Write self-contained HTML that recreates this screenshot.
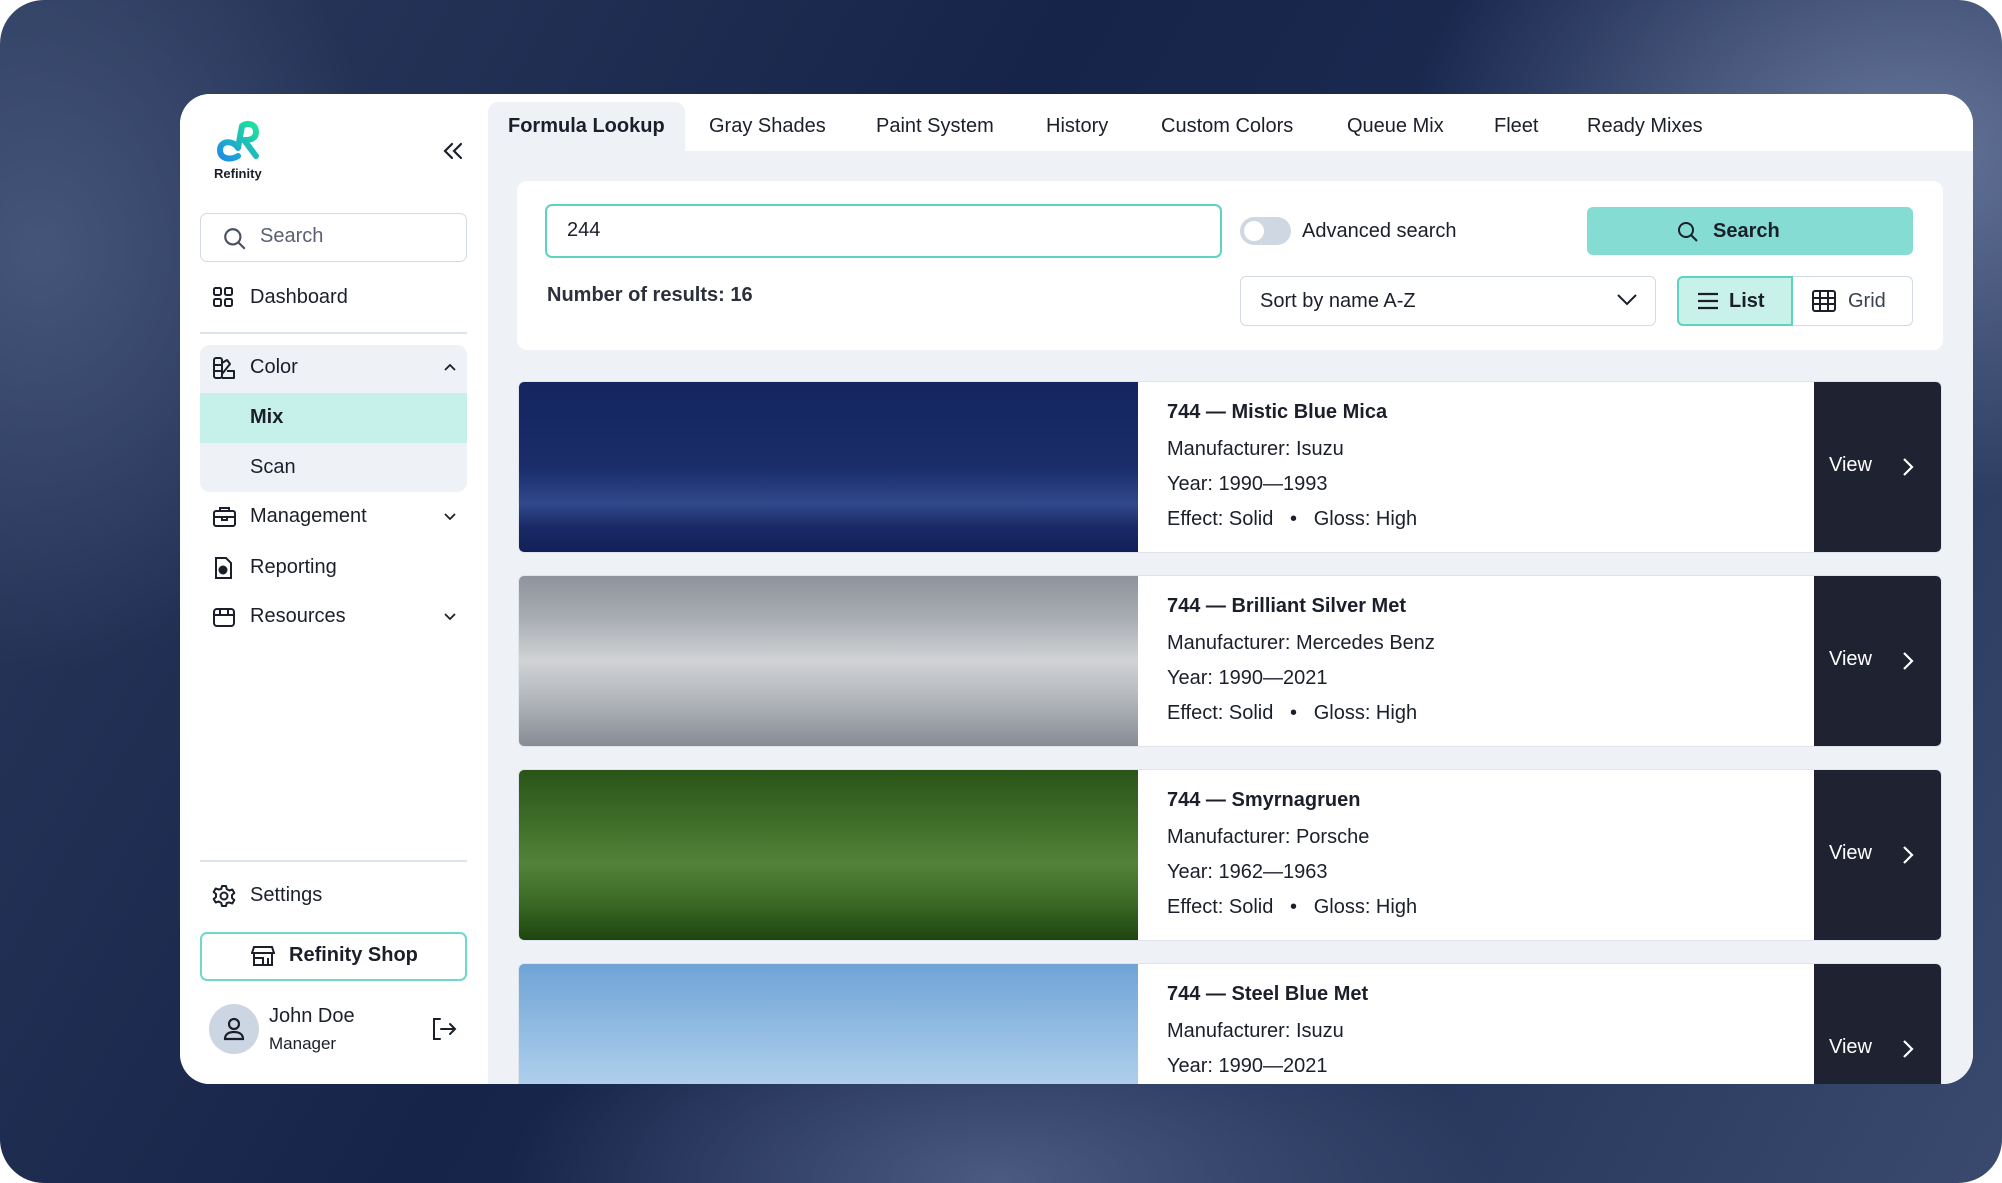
<!DOCTYPE html>
<html><head><meta charset="utf-8"><style>
*{box-sizing:border-box;margin:0;padding:0}
body{width:2002px;height:1183px;background:#fff;font-family:"Liberation Sans",sans-serif;color:#1b1f2a;overflow:hidden;position:relative}
.bg{position:absolute;inset:0;border-radius:44px;overflow:hidden;
background:
radial-gradient(ellipse 700px 500px at 1900px 150px,#66759a 0%,rgba(100,115,154,0) 70%),
radial-gradient(ellipse 500px 600px at 40px 250px,#45557a 0%,rgba(76,93,128,0) 70%),
radial-gradient(ellipse 700px 300px at 1000px 1180px,#4a5a80 0%,rgba(85,101,138,0) 70%),
linear-gradient(120deg,#2a3a5c 0%,#17244a 40%,#1b2a50 60%,#3a4a6e 100%)}
.card{position:absolute;left:180px;top:94px;width:1793px;height:990px;background:#fff;border-radius:30px;overflow:hidden}
.side{position:absolute;left:0;top:0;width:308px;height:990px;background:#fff}
.main{position:absolute;left:308px;top:0;right:0;bottom:0;background:#eef2f7}
.tabs{position:absolute;left:0;top:0;right:0;height:57px;background:#fff}
.tab{position:absolute;top:8px;height:49px;line-height:49px;font-size:20px;color:#1b1f2a}
.tab.act{background:#eef2f7;border-radius:10px 10px 0 0;font-weight:bold;padding:0 20px}
.abs{position:absolute}
.nav{position:absolute;left:32px;font-size:20px}
.nav svg{position:absolute;left:0}
.nav span{position:absolute;left:38px;white-space:nowrap}
.row{position:absolute;left:30px;width:1424px;height:172px;background:#fff;border-radius:6px;overflow:hidden;border:1px solid #dfe5ee}
.sw{position:absolute;left:0;top:0;width:619px;height:100%}
.info{position:absolute;left:648px;top:0;font-size:20px;line-height:35px}
.info b{display:block;margin-top:13px;margin-bottom:2px}
.view{position:absolute;right:0;top:0;width:127px;height:100%;background:#1f2231;color:#fff;font-size:20px}
</style></head><body>
<div class="bg"></div>
<div class="card">
 <div class="side">
  <svg class="abs" style="left:34px;top:26px" width="48" height="42" viewBox="0 0 48 42">
   <defs><linearGradient id="lg" x1="0" y1="1" x2="1" y2="0"><stop offset="0" stop-color="#1e8de6"/><stop offset="1" stop-color="#1fe39a"/></linearGradient></defs>
   <path d="M24 36 C18 40 6 40 6 30 C6 20 20 20 24 28 L28 6 C34 2 42 4 42 12 C42 20 34 20 30 20 L42 36" fill="none" stroke="url(#lg)" stroke-width="6" stroke-linecap="round" stroke-linejoin="round"/>
  </svg>
  <div class="abs" style="left:34px;top:72px;font-size:13px;font-weight:bold">Refinity</div>
  <svg class="abs" style="left:262px;top:46px" width="22" height="22" viewBox="0 0 22 22" fill="none" stroke="#1b1f2a" stroke-width="2.2" stroke-linecap="round"><path d="M10 4 L3 11 L10 18 M19 4 L12 11 L19 18"/></svg>
  <div class="abs" style="left:20px;top:119px;width:267px;height:49px;border:1.5px solid #d3dae4;border-radius:7px"></div>
  <svg class="abs" style="left:42px;top:132px" width="26" height="26" viewBox="0 0 24 24" fill="none" stroke="#4a5160" stroke-width="2"><circle cx="10" cy="10" r="7"/><path d="M15 15 L21 21"/></svg>
  <div class="abs" style="left:80px;top:131px;font-size:20px;color:#596170">Search</div>
  <div class="nav" style="top:192px;height:24px"><svg width="22" height="22" viewBox="0 0 22 22" fill="none" stroke="#1b1f2a" stroke-width="2"><rect x="2" y="2" width="7" height="7" rx="1.5"/><rect x="13" y="2" width="7" height="7" rx="1.5"/><rect x="2" y="13" width="7" height="7" rx="1.5"/><rect x="13" y="13" width="7" height="7" rx="1.5"/></svg><span>Dashboard</span></div>
  <div class="abs" style="left:20px;top:238px;width:267px;height:2px;background:#dde4ee"></div>
  <div class="abs" style="left:20px;top:251px;width:267px;height:147px;background:#eef2f7;border-radius:10px;overflow:hidden">
   <div class="abs" style="left:0;top:48px;width:267px;height:50px;background:#c6f1ea"></div>
  </div>
  <div class="nav" style="top:262px;height:24px"><svg width="24" height="24" viewBox="0 0 24 24" fill="none" stroke="#1b1f2a" stroke-width="2" stroke-linejoin="round"><rect x="2" y="2" width="8" height="20" rx="2"/><path d="M2 9h8M2 15h8M10 7l5-3 3 4-8 10M10 22h12v-7h-7"/></svg><span>Color</span></div>
  <svg class="abs" style="left:263px;top:268px" width="14" height="10" viewBox="0 0 14 10" fill="none" stroke="#1b1f2a" stroke-width="1.8"><path d="M2 8 L7 3 L12 8"/></svg>
  <div class="abs" style="left:70px;top:312px;font-size:20px;font-weight:bold">Mix</div>
  <div class="abs" style="left:70px;top:362px;font-size:20px">Scan</div>
  <div class="nav" style="top:411px;height:24px"><svg width="25" height="24" viewBox="0 0 25 24" fill="none" stroke="#1b1f2a" stroke-width="2"><rect x="2" y="6" width="21" height="15" rx="2"/><path d="M8 6V3h9v3M2 12h21M10 12v3h5v-3"/></svg><span>Management</span></div>
  <svg class="abs" style="left:263px;top:418px" width="14" height="10" viewBox="0 0 14 10" fill="none" stroke="#1b1f2a" stroke-width="1.8"><path d="M2 2 L7 7 L12 2"/></svg>
  <div class="nav" style="top:462px;height:24px"><svg width="22" height="24" viewBox="0 0 22 24" fill="none" stroke="#1b1f2a" stroke-width="2"><path d="M4 2h10l5 5v15H4z"/><circle cx="11" cy="14" r="3.5" fill="#1b1f2a"/></svg><span>Reporting</span></div>
  <div class="nav" style="top:511px;height:24px"><svg width="24" height="24" viewBox="0 0 24 24" fill="none" stroke="#1b1f2a" stroke-width="2"><rect x="2" y="4" width="20" height="17" rx="3"/><path d="M2 10h20M8 4v6M16 4v6"/></svg><span>Resources</span></div>
  <svg class="abs" style="left:263px;top:518px" width="14" height="10" viewBox="0 0 14 10" fill="none" stroke="#1b1f2a" stroke-width="1.8"><path d="M2 2 L7 7 L12 2"/></svg>
  <div class="abs" style="left:20px;top:766px;width:267px;height:2px;background:#dde4ee"></div>
  <div class="nav" style="top:790px;height:24px"><svg width="24" height="24" viewBox="0 0 24 24" fill="none" stroke="#1b1f2a" stroke-width="2" stroke-linejoin="round"><circle cx="12" cy="12" r="3.5"/><path d="M10 2h4l.7 3 2.6 1.5 3-1 2 3.5-2.3 2v3l2.3 2-2 3.5-3-1L14.7 19 14 22h-4l-.7-3-2.6-1.5-3 1-2-3.5 2.3-2v-3L1.7 8l2-3.5 3 1L9.3 5z"/></svg><span>Settings</span></div>
  <div class="abs" style="left:20px;top:838px;width:267px;height:49px;border:2.5px solid #6fd8c8;border-radius:7px"></div>
  <svg class="abs" style="left:71px;top:851px" width="24" height="22" viewBox="0 0 24 22" fill="none" stroke="#1b1f2a" stroke-width="2"><path d="M3 2h18l2 6H1zM3 8v12h18V8M3 13h9v7M17 13v7"/></svg>
  <div class="abs" style="left:109px;top:850px;font-size:20px;font-weight:bold">Refinity Shop</div>
  <div class="abs" style="left:29px;top:910px;width:50px;height:50px;border-radius:50%;background:#ccd6e3"></div>
  <svg class="abs" style="left:42px;top:922px" width="24" height="26" viewBox="0 0 24 26" fill="none" stroke="#1b1f2a" stroke-width="2.2"><circle cx="12" cy="8" r="5"/><path d="M3 23c0-5 4-7 9-7s9 2 9 7z"/></svg>
  <div class="abs" style="left:89px;top:911px;font-size:20px">John Doe</div>
  <div class="abs" style="left:89px;top:940px;font-size:17px">Manager</div>
  <svg class="abs" style="left:251px;top:923px" width="26" height="24" viewBox="0 0 26 24" fill="none" stroke="#1b1f2a" stroke-width="2" stroke-linecap="round"><path d="M9 2H3v20h6M10 12h14M19 7l5 5-5 5"/></svg>
 </div>
 <div class="main">
  <div class="tabs"></div>
  <div class="tab act" style="left:0">Formula Lookup</div>
  <div class="tab" style="left:221px">Gray Shades</div>
  <div class="tab" style="left:388px">Paint System</div>
  <div class="tab" style="left:558px">History</div>
  <div class="tab" style="left:673px">Custom Colors</div>
  <div class="tab" style="left:859px">Queue Mix</div>
  <div class="tab" style="left:1006px">Fleet</div>
  <div class="tab" style="left:1099px">Ready Mixes</div>
  <div class="abs" style="left:29px;top:87px;width:1426px;height:169px;background:#fff;border-radius:10px">
   <div class="abs" style="left:28px;top:23px;width:677px;height:54px;border:2.5px solid #5dd3c2;border-radius:7px;font-size:20px;line-height:49px;padding-left:20px">244</div>
   <div class="abs" style="left:30px;top:100px;font-size:20px;font-weight:bold;color:#2b303b;line-height:28px">Number of results: 16</div>
   <div class="abs" style="left:723px;top:36px;width:51px;height:28px;border-radius:14px;background:#cfd7e2"><div class="abs" style="left:4px;top:4px;width:20px;height:20px;border-radius:50%;background:#fff"></div></div>
   <div class="abs" style="left:785px;top:36px;font-size:20px;line-height:28px">Advanced search</div>
   <div class="abs" style="left:1070px;top:26px;width:326px;height:48px;background:#84dcd2;border-radius:6px"></div>
   <svg class="abs" style="left:1159px;top:39px" width="24" height="24" viewBox="0 0 24 24" fill="none" stroke="#1b1f2a" stroke-width="2"><circle cx="10" cy="10" r="7"/><path d="M15 15 L21 21"/></svg>
   <div class="abs" style="left:1196px;top:36px;font-size:20px;font-weight:bold;line-height:28px">Search</div>
   <div class="abs" style="left:723px;top:95px;width:416px;height:50px;border:1.5px solid #d3dae4;border-radius:6px"></div>
   <div class="abs" style="left:743px;top:106px;font-size:20px;line-height:28px">Sort by name A-Z</div>
   <svg class="abs" style="left:1099px;top:112px" width="22" height="14" viewBox="0 0 22 14" fill="none" stroke="#1b1f2a" stroke-width="2"><path d="M2 2 L11 11 L20 2"/></svg>
   <div class="abs" style="left:1160px;top:95px;width:236px;height:50px;border:1.5px solid #d3dae4;border-radius:6px"></div>
   <div class="abs" style="left:1160px;top:95px;width:116px;height:50px;border:2px solid #5dd3c2;border-radius:6px 0 0 6px;background:#c8f1ea"></div>
   <svg class="abs" style="left:1180px;top:109px" width="22" height="22" viewBox="0 0 22 22" fill="none" stroke="#1b1f2a" stroke-width="2.2"><path d="M1 4h20M1 11h20M1 18h20"/></svg>
   <div class="abs" style="left:1212px;top:106px;font-size:20px;font-weight:bold;line-height:28px">List</div>
   <svg class="abs" style="left:1295px;top:109px" width="24" height="22" viewBox="0 0 24 22" fill="none" stroke="#1b1f2a" stroke-width="2"><rect x="1" y="1" width="22" height="20" rx="2"/><path d="M1 8h22M1 14h22M8 1v20M16 1v20"/></svg>
   <div class="abs" style="left:1331px;top:106px;font-size:20px;line-height:28px;color:#3a4150">Grid</div>
  </div>
  <div class="row" style="top:287px"><div class="sw" style="background:linear-gradient(180deg,#142560 0%,#1a2d6a 50%,#31488a 72%,#1a2a66 85%,#122058 100%)"></div>
   <div class="info"><b>744 — Mistic Blue Mica</b>Manufacturer: Isuzu<br>Year: 1990—1993<br>Effect: Solid &nbsp; • &nbsp; Gloss: High</div>
   <div class="view"><span class="abs" style="left:15px;top:72px">View</span><svg class="abs" style="left:88px;top:75px" width="12" height="20" viewBox="0 0 12 20" fill="none" stroke="#fff" stroke-width="2.2"><path d="M2 2 L10 10 L2 18"/></svg></div></div>
  <div class="row" style="top:481px"><div class="sw" style="background:linear-gradient(180deg,#8e949c 0%,#a9adb3 25%,#d1d3d5 50%,#b3b7bc 72%,#868c94 100%)"></div>
   <div class="info"><b>744 — Brilliant Silver Met</b>Manufacturer: Mercedes Benz<br>Year: 1990—2021<br>Effect: Solid &nbsp; • &nbsp; Gloss: High</div>
   <div class="view"><span class="abs" style="left:15px;top:72px">View</span><svg class="abs" style="left:88px;top:75px" width="12" height="20" viewBox="0 0 12 20" fill="none" stroke="#fff" stroke-width="2.2"><path d="M2 2 L10 10 L2 18"/></svg></div></div>
  <div class="row" style="top:675px"><div class="sw" style="background:linear-gradient(180deg,#2a5418 0%,#3e6d28 30%,#53833a 55%,#3a6a24 78%,#1f450f 100%)"></div>
   <div class="info"><b>744 — Smyrnagruen</b>Manufacturer: Porsche<br>Year: 1962—1963<br>Effect: Solid &nbsp; • &nbsp; Gloss: High</div>
   <div class="view"><span class="abs" style="left:15px;top:72px">View</span><svg class="abs" style="left:88px;top:75px" width="12" height="20" viewBox="0 0 12 20" fill="none" stroke="#fff" stroke-width="2.2"><path d="M2 2 L10 10 L2 18"/></svg></div></div>
  <div class="row" style="top:869px"><div class="sw" style="background:linear-gradient(180deg,#6fa3d6 0%,#9cc3e6 50%,#c9e0f2 100%)"></div>
   <div class="info"><b>744 — Steel Blue Met</b>Manufacturer: Isuzu<br>Year: 1990—2021<br>Effect: Solid &nbsp; • &nbsp; Gloss: High</div>
   <div class="view"><span class="abs" style="left:15px;top:72px">View</span><svg class="abs" style="left:88px;top:75px" width="12" height="20" viewBox="0 0 12 20" fill="none" stroke="#fff" stroke-width="2.2"><path d="M2 2 L10 10 L2 18"/></svg></div></div>
 </div>
</div>
</body></html>
